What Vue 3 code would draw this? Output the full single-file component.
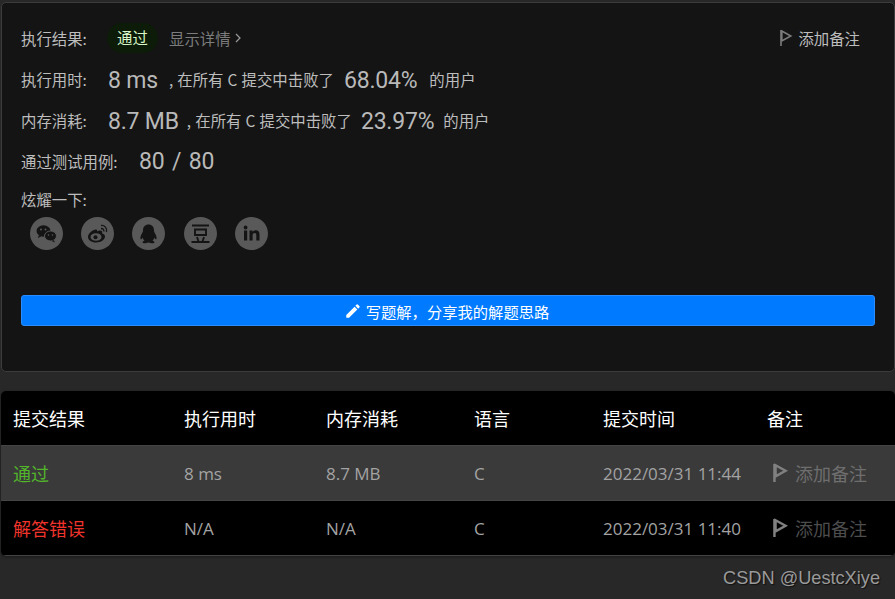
<template>
  <div class="page">
    <section class="result-panel">
      <div class="row first">
        <span class="label">执行结果:</span>
        <span class="pass-badge">通过</span>
        <span class="details">显示详情
          <svg class="chevron" viewBox="0 0 8 12"><path d="M2 2l4 4-4 4" fill="none" stroke="currentColor" stroke-width="1.2" /></svg>
        </span>
        <span class="note-top">
          <svg class="flag" viewBox="0 0 14 18"><path d="M2 1v16M2.8 2l9 5-9 5z" fill="none" stroke="currentColor" stroke-width="1.6" /></svg>
          添加备注
        </span>
      </div>
      <div class="row stat-row time-row">
        <span class="label">执行用时:</span>
        <span class="big">8 ms</span>
        <span class="txt beat">, 在所有 C 提交中击败了</span>
        <span class="big pct">68.04%</span>
        <span class="txt users">的用户</span>
      </div>
      <div class="row stat-row mem-row">
        <span class="label">内存消耗:</span>
        <span class="big">8.7 MB</span>
        <span class="txt beat">, 在所有 C 提交中击败了</span>
        <span class="big pct">23.97%</span>
        <span class="txt users">的用户</span>
      </div>
      <div class="row case-row">
        <span class="label case-label">通过测试用例:</span>
        <span class="big cases">80 / 80</span>
      </div>
      <div class="share-label">炫耀一下:</div>
      <div class="share">
        <span class="circle">
          <svg viewBox="0 0 33 33">
            <ellipse cx="13.5" cy="14" rx="7" ry="5.8" />
            <path d="M9 18l-1.2 3 3.4-1.6z" />
            <ellipse cx="20.5" cy="19" rx="6" ry="5" stroke="#595959" stroke-width="1" />
            <path d="M23.5 23l1.6 2.4-3.6-1.4z" />
            <circle cx="11" cy="12.5" r="1" fill="#595959" />
            <circle cx="15.5" cy="12.5" r="1" fill="#595959" />
            <circle cx="18.5" cy="18" r=".8" fill="#595959" />
            <circle cx="22.5" cy="18" r=".8" fill="#595959" />
          </svg>
        </span>
        <span class="circle">
          <svg viewBox="0 0 33 33">
            <path d="M14.5 12.5c-4 .8-7.500 4.500-7.500 7.500 0 3 3.500 5.500 8 5.500 5 0 9-3 9-6 0-2-2-2.800-3-3 .6-1.500.3-3-2-3-1.200 0-3 .8-3 .8s.6-2.500-1.500-1.800z" />
            <ellipse cx="15" cy="20" rx="5.500" ry="3.800" fill="#595959" />
            <circle cx="14.500" cy="20.300" r="2" />
            <path d="M20 8.500c3.500-.5 6.500 2.500 5.500 6.500M20 11.500c1.800-.2 3.200 1.300 2.800 3" fill="none" stroke="#141414" stroke-width="1.300" />
          </svg>
        </span>
        <span class="circle">
          <svg viewBox="0 0 33 33">
            <path d="M16.500 7.500c-3.500 0-5.500 2.500-5.500 6 0 1-.2 1.500-.8 2.500-1.200 2-2.200 4.500-1.700 6 .5.800 1.500-.3 2.200-1.300.3 1.300 1 2.300 1.800 3-1.300.4-2 1-2 1.600 0 1 2.500 1.200 4 .7.700-.2 1.300-.5 2-.5s1.300.3 2 .5c1.500.5 4 .3 4-.7 0-.6-.7-1.200-2-1.600.8-.7 1.500-1.700 1.800-3 .7 1 1.700 2.100 2.200 1.300.5-1.500-.5-4-1.700-6-.6-1-.8-1.500-.8-2.500 0-3.500-2-6-5.500-6z" />
          </svg>
        </span>
        <span class="circle">
          <svg viewBox="0 0 33 33">
            <path d="M8 8.500h17M11 12.500h11v5.500H11zM13 20l1.500 4.500M20 20l-1.500 4.500M7.500 25h18" fill="none" stroke="#141414" stroke-width="1.900" />
          </svg>
        </span>
        <span class="circle">
          <svg viewBox="0 0 33 33">
            <rect x="9" y="13.500" width="3.200" height="10" />
            <circle cx="10.600" cy="10.500" r="1.900" />
            <path d="M14.500 13.500h3v1.500c.7-1.100 1.900-1.800 3.300-1.800 2.700 0 3.700 1.700 3.700 4.500v5.800h-3.200v-5.200c0-1.400-.4-2.300-1.700-2.300-1.400 0-2 1-2 2.400v5.100h-3.100z" />
          </svg>
        </span>
      </div>
      <button class="solution-btn">
        <svg class="pencil" viewBox="0 0 24 24"><path fill="currentColor" d="M3 17.250V21h3.750L17.810 9.940l-3.750-3.750L3 17.250zM20.710 7.040a1 1 0 0 0 0-1.410l-2.340-2.340a1 1 0 0 0-1.410 0l-1.830 1.830 3.750 3.750 1.830-1.830z" /></svg>
        写题解，分享我的解题思路
      </button>
    </section>

    <table class="subs">
      <thead>
        <tr>
          <th class="c1">提交结果</th>
          <th class="c2">执行用时</th>
          <th class="c3">内存消耗</th>
          <th class="c4">语言</th>
          <th class="c5">提交时间</th>
          <th>备注</th>
        </tr>
      </thead>
      <tbody>
        <tr v-for="sub in submissions" :key="sub.date" :class="{ active: sub.ok }">
          <td><span :class="sub.ok ? 'ok' : 'err'">{{ sub.status }}</span></td>
          <td>{{ sub.time }}</td>
          <td>{{ sub.mem }}</td>
          <td>C</td>
          <td>{{ sub.date }}</td>
          <td class="note-cell">
            <span class="note">
              <svg class="flag-lg" viewBox="0 0 14 18"><path d="M2 1v16M3 2l9 5-9 5z" fill="none" stroke="currentColor" stroke-width="2.200" /></svg>
              添加备注
            </span>
          </td>
        </tr>
      </tbody>
    </table>

    <div class="watermark">CSDN @UestcXiye</div>
  </div>
</template>

<script setup>
const submissions = [
  { status: '通过', ok: true, time: '8 ms', mem: '8.7 MB', date: '2022/03/31 11:44' },
  { status: '解答错误', ok: false, time: 'N/A', mem: 'N/A', date: '2022/03/31 11:40' }
]
</script>

<style>
html, body {
  margin: 0;
  background: #282828;
}
</style>

<style scoped>
.page {
  width: 895px;
  height: 599px;
  overflow: hidden;
  background: #282828;
  padding-top: 2px;
  box-sizing: border-box;
  font-family: "Liberation Sans", "Noto Sans CJK SC", sans-serif;
}

.result-panel {
  margin-left: 1px;
  width: 894px;
  height: 370px;
  box-sizing: border-box;
  padding: 0 19px 0 19px;
  background: #141414;
  border: 1px solid #3c3c3c;
  border-radius: 5px;
}

.row {
  display: flex;
  align-items: center;
  height: 30px;
  font-family: "Noto Sans CJK SC", sans-serif;
  font-size: 15.4px;
  color: #bdbdbd;
  white-space: nowrap;
}

.first {
  margin-top: 20px;
}

.time-row {
  margin-top: 12px;
}

.mem-row {
  margin-top: 11px;
}

.case-row {
  margin-top: 10px;
}

.stat-row .label,
.stat-row .txt {
  margin-bottom: 2px;
}

.label {
  width: 87px;
  flex: none;
}

.case-label {
  width: 118px;
}

.pass-badge {
  width: 51px;
  height: 30px;
  line-height: 29px;
  text-align: center;
  border-radius: 15px;
  background: #0c1c08;
  color: #d9f7c9;
  margin-left: -1px;
}

.details {
  margin-left: 11px;
  color: #7c7c7c;
  display: flex;
  align-items: center;
  gap: 3px;
}

.chevron {
  width: 8px;
  height: 12px;
  color: #9a9a9a;
}

.note-top {
  margin-left: auto;
  margin-right: 15px;
  display: flex;
  align-items: center;
  gap: 5px;
  font-size: 15.4px;
  color: #bdbdbd;
}

.flag {
  width: 14px;
  height: 18px;
  color: #7c7c7c;
}

.big {
  font-family: Roboto, sans-serif;
  font-size: 23px;
  color: #b9b9b9;
  letter-spacing: -.2px;
}

.beat {
  margin-left: 11px;
  word-spacing: .7px;
}

.mem-row .beat {
  margin-left: 8px;
}

.pct {
  margin-left: 10px;
}

.mem-row .pct {
  margin-left: 9px;
}

.users {
  margin-left: 12px;
}

.mem-row .users {
  margin-left: 9px;
}

.cases {
  word-spacing: 2px;
}

.share-label {
  margin-top: 13px;
  font-family: "Noto Sans CJK SC", sans-serif;
  font-size: 15.4px;
  line-height: 20px;
  color: #bdbdbd;
}

.share {
  display: flex;
  gap: 18.2px;
  margin-top: 8px;
  padding-left: 9px;
}

.circle {
  width: 33px;
  height: 33px;
  border-radius: 50%;
  background: #595959;
}

.circle svg {
  display: block;
  width: 33px;
  height: 33px;
  fill: #141414;
}

.solution-btn {
  display: flex;
  align-items: center;
  justify-content: center;
  gap: 4px;
  width: 100%;
  height: 31px;
  margin-top: 45px;
  padding: 0 3px 0 0;
  background: #007aff;
  border: 1px solid #2a8dfb;
  border-radius: 3px;
  color: #fff;
  font-family: "Noto Sans CJK SC", sans-serif;
  font-size: 15.3px;
}

.pencil {
  width: 18px;
  height: 18px;
}

.subs {
  margin: 19px 0 0 1px;
  width: 894px;
  table-layout: fixed;
  border-collapse: separate;
  border-spacing: 0;
  background: #000;
  border-radius: 5px;
  overflow: hidden;
  font-family: "Noto Sans CJK SC", sans-serif;
  box-shadow: 0 1px 3px rgba(0, 0, 0, .4);
}

.subs th,
.subs td {
  height: 55px;
  padding: 0 0 0 12px;
  text-align: left;
  font-size: 18px;
  font-weight: 400;
  box-sizing: border-box;
  border-bottom: 1px solid #444;
  white-space: nowrap;
}

.subs th {
  color: #fff;
}

.subs td {
  color: #a3a3a3;
  font-family: "Open Sans", "Noto Sans CJK SC", sans-serif;
  font-size: 17px;
}

.c1 { width: 171px; }
.c2 { width: 142px; }
.c3 { width: 148px; }
.c4 { width: 129px; }
.c5 { width: 164px; }

.subs .active td {
  background: #3a3a3a;
}

.ok {
  color: #52b52a;
  font-size: 18px;
  font-family: "Noto Sans CJK SC", sans-serif;
}

.err {
  color: #f0342c;
  font-size: 18px;
  font-family: "Noto Sans CJK SC", sans-serif;
}

.note {
  display: flex;
  align-items: center;
  gap: 7px;
  padding-left: 5px;
  font-family: "Noto Sans CJK SC", sans-serif;
  font-size: 18px;
  color: #6e6e6e;
}

tr:not(.active) .note {
  color: #4d4d4d;
}

.flag-lg {
  width: 16px;
  height: 20px;
  color: #808080;
}

.watermark {
  margin-top: 12px;
  text-align: right;
  padding-right: 15px;
  font-family: "Liberation Sans", sans-serif;
  font-size: 18.2px;
  color: #9a9a9a;
  text-shadow: 1px 1px 1px #111;
}
</style>
